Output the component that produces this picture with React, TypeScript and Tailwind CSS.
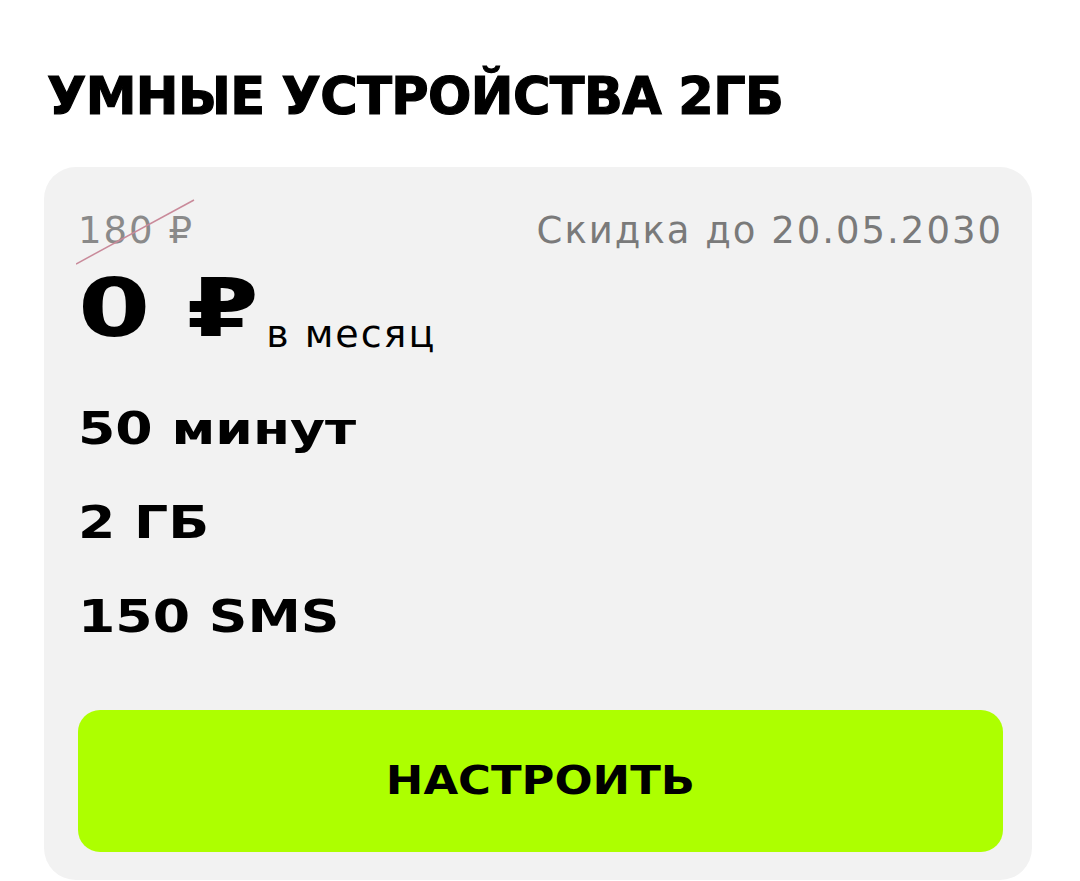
const features = ['50 минут', '2 ГБ', '150 SMS'];

export default function App() {
  return (
    <div className="min-h-[881px] overflow-hidden bg-white pl-[44px] pr-[48px] pt-[71px]">
      {/* Title */}
      <h1 className="pl-[3px] font-['DejaVu_Sans','Liberation_Sans',sans-serif] text-[51px] font-bold leading-none tracking-[-0.6px] text-black [-webkit-text-stroke:1.2px_black]">
        УМНЫЕ УСТРОЙСТВА 2ГБ
      </h1>

      {/* Tariff card */}
      <div className="mt-[45px] h-[713px] rounded-[32px] bg-[#f2f2f2] pb-[26px] pl-[34px] pr-[29px] pt-[40px]">
        <div className="flex items-start justify-between font-['DejaVu_Sans','Liberation_Sans',sans-serif] text-[37px] leading-[48px] tracking-[2px]">
          <div className="relative text-[#8a8a8a]">
            180 ₽
            <svg className="absolute left-[-2px] top-[-8px]" width="120" height="66" viewBox="0 0 120 66">
              <line x1="0" y1="65" x2="118" y2="1" stroke="#c98a9a" strokeWidth="1.5" />
            </svg>
          </div>
          <div className="text-[#7a7a7a]">Скидка до 20.05.2030</div>
        </div>

        <div className="mt-[14px] flex items-end">
          <span className="inline-block origin-left scale-x-[1.3] font-['DejaVu_Sans','Liberation_Sans',sans-serif] text-[80px] font-bold leading-none text-black">
            0 ₽
          </span>
          <span className="mb-[-4px] ml-[49px] font-['DejaVu_Sans','Liberation_Sans',sans-serif] text-[38px] leading-none tracking-[2px] text-black">
            в месяц
          </span>
        </div>

        <div className="mt-[58px] flex flex-col items-start gap-[50px] font-['DejaVu_Sans','Liberation_Sans',sans-serif] text-[44px] font-bold leading-none text-black">
          {features.map((f) => (
            <div key={f} className="w-fit origin-left scale-x-[1.22]">
              {f}
            </div>
          ))}
        </div>

        <button className="mt-[71px] flex h-[142px] w-full items-center justify-center rounded-[22px] bg-[#adff00] font-['DejaVu_Sans','Liberation_Sans',sans-serif] text-[39px] font-bold text-black">
          <span className="inline-block scale-x-[1.15]">НАСТРОИТЬ</span>
        </button>
      </div>
    </div>
  );
}
